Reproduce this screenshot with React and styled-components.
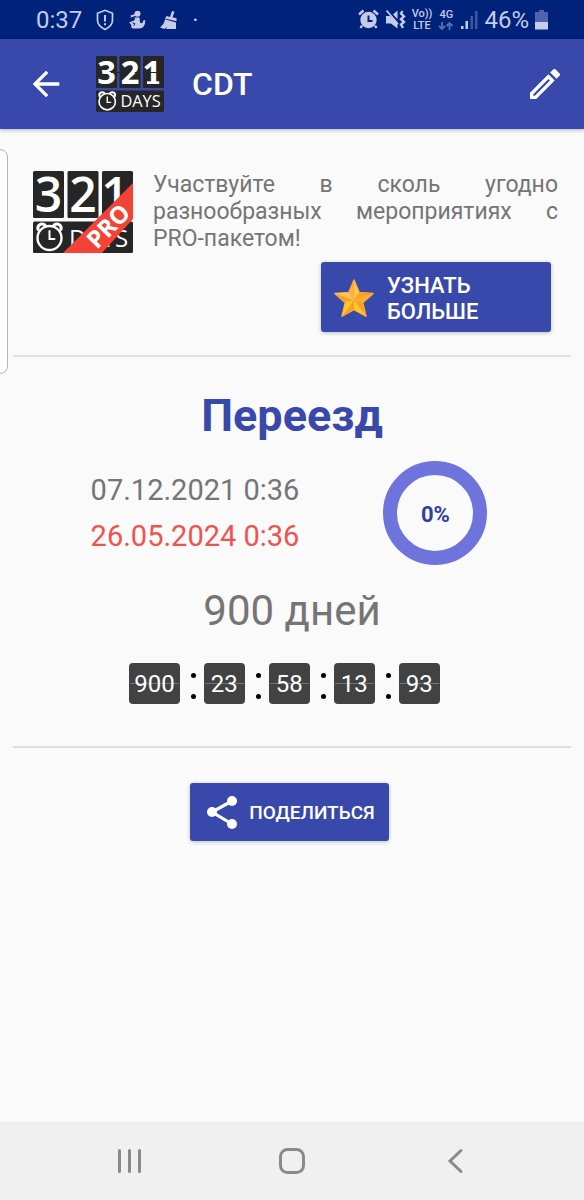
import React from "react";
import styled, { createGlobalStyle } from "styled-components";

const colors = {
  status: "#00227b",
  statusText: "#c5cbe9",
  primary: "#3949ab",
  background: "#fafafa",
  text: "#757575",
  danger: "#ef5350",
  ring: "#6f74dd",
  tile: "#424242",
  line: "#e0e0e0",
  nav: "#f0f0f0",
};

const GlobalStyle = createGlobalStyle`
  * {
    box-sizing: border-box;
  }
  body {
    margin: 0;
    background: ${colors.background};
    color: ${colors.text};
    font-family: Roboto, "Liberation Sans", sans-serif;
  }
  h1, p {
    margin: 0;
  }
  svg {
    display: block;
    flex-shrink: 0;
    overflow: visible;
  }
`;

const Page = styled.div`
  position: relative;
  display: flex;
  flex-direction: column;
  min-height: 100vh;
`;
const StatusBar = styled.div`
  display: flex;
  justify-content: space-between;
  align-items: center;
  height: 39px;
  padding: 0 36px;
  background: ${colors.status};
  color: ${colors.statusText};
  font-size: 24px;
  line-height: 28px;
`;
const StatusGroup = styled.div`
  display: flex;
  align-items: center;
  gap: ${(props) => props.$gap};
`;
const StatusLabel = styled.span`
  display: flex;
  flex-direction: column;
  align-items: center;
  font-size: 11px;
  line-height: 12px;
  font-weight: 500;
  white-space: nowrap;
`;
const Header = styled.header`
  position: relative;
  display: flex;
  align-items: center;
  height: 90px;
  padding: 0 19px 0 26px;
  background: ${colors.primary};
  color: #fff;
  box-shadow: 0 1px 4px rgba(0, 0, 0, 0.3);
`;
const IconButton = styled.button`
  display: flex;
  justify-content: center;
  align-items: center;
  padding: 0;
  border: 0;
  background: none;
  color: inherit;
  cursor: pointer;
`;
const Brand = styled.div`
  display: flex;
  flex: 1;
  align-items: center;
  gap: 28px;
  margin-left: 30px;
`;
const AppName = styled.span`
  font-size: 32px;
  line-height: 38px;
  font-weight: 500;
`;
const EdgePanel = styled.aside`
  position: absolute;
  top: 149px;
  left: -16px;
  width: 24px;
  height: 225px;
  border: 1px solid #b4b4b4;
  border-radius: 8px;
  background: #fff;
`;
const Main = styled.main`
  flex: 1;
  padding: 0 13px;
`;
const Promo = styled.section`
  display: grid;
  grid-template-columns: 100px 1fr;
  gap: 20px;
  padding: 42px 13px 23px 20px;
  border-bottom: 2px solid ${colors.line};
`;
const PromoBody = styled.div`
  display: flex;
  flex-direction: column;
  gap: 10px;
`;
const PromoText = styled.p`
  font-size: 23px;
  line-height: 27px;
  text-align: justify;
`;
const NoWrap = styled.span`
  white-space: nowrap;
`;
const Button = styled.button`
  display: flex;
  align-items: center;
  border: 0;
  border-radius: 3px;
  background: ${colors.primary};
  color: #fff;
  font-family: inherit;
  font-weight: 500;
  text-transform: uppercase;
  text-align: left;
  box-shadow: 0 1px 4px rgba(0, 0, 0, 0.24);
  cursor: pointer;
`;
const MoreButton = styled(Button)`
  align-self: flex-end;
  gap: 12px;
  width: 230px;
  height: 70px;
  margin-right: 7px;
  padding: 3px 64px 0 12px;
  font-size: 22px;
  line-height: 26px;
`;
const ShareButton = styled(Button)`
  gap: 5px;
  height: 58px;
  padding: 2px 14px 0;
  font-size: 19px;
  line-height: 24px;
`;
const Event = styled.section`
  display: flex;
  flex-direction: column;
  align-items: center;
  padding: 32px 0 42px;
  border-bottom: 2px solid ${colors.line};
`;
const Title = styled.h1`
  color: ${colors.primary};
  font-size: 45px;
  line-height: 54px;
  font-weight: 700;
`;
const Summary = styled.div`
  display: flex;
  align-items: center;
  gap: 84px;
  margin-top: 18px;
  padding-right: 6px;
`;
const DateLine = styled.p`
  color: ${(props) => (props.$end ? colors.danger : colors.text)};
  font-size: 29px;
  line-height: 46px;
`;
const Ring = styled.div`
  display: flex;
  justify-content: center;
  align-items: center;
  width: 104px;
  height: 104px;
  padding-top: 3px;
  border: 14px solid ${colors.ring};
  border-radius: 50%;
  color: #303f9f;
  font-size: 22px;
  line-height: 26px;
  font-weight: 700;
`;
const Remaining = styled.p`
  margin-top: 21px;
  font-size: 42px;
  line-height: 50px;
`;
const Timer = styled.div`
  display: flex;
  margin-top: 27px;
  padding-right: 15px;
`;
const Tile = styled.span`
  display: flex;
  justify-content: center;
  align-items: center;
  min-width: 41px;
  height: 41px;
  padding: 0 5px;
  border-radius: 4px;
  background: linear-gradient(#757575, #757575) center / calc(100% - 2px) 1px no-repeat ${colors.tile};
  color: #fff;
  font-size: 24px;
  line-height: 28px;
`;
const Colon = styled.span`
  display: flex;
  flex-direction: column;
  align-items: center;
  justify-content: center;
  gap: 16px;
  width: 24px;
  padding: 5px 0 0 4px;

  &::before,
  &::after {
    content: "";
    width: 5px;
    height: 5px;
    border-radius: 50%;
    background: #000;
  }
`;
const Actions = styled.div`
  display: flex;
  justify-content: center;
  padding: 35px 5px 0 0;
`;
const NavBar = styled.nav`
  display: grid;
  grid-template-columns: repeat(3, 1fr);
  height: 78px;
  padding: 0 48px;
  background: ${colors.nav};
  color: #8a8a8a;
`;

function Logo({ width, height, pro }) {
  return (
    <svg width={width} height={height} viewBox="0 0 100 82" role="img" aria-label="321 days">
      <g fill="#262626">
        <rect x="0" y="0" width="31" height="47" rx="1.5" />
        <rect x="34.5" y="0" width="31" height="47" rx="1.5" />
        <rect x="69" y="0" width="31" height="47" rx="1.5" />
        <rect x="0" y="50.5" width="100" height="31.5" rx="1.5" />
      </g>
      <g
        fill="#fff"
        fontFamily="Open Sans, sans-serif"
        fontSize="48"
        fontWeight={pro ? 600 : 700}
        textAnchor="middle"
      >
        <text x="15.5" y="41">3</text>
        <text x="50" y="41">2</text>
        <text x="82" y="41">1</text>
      </g>
      {!pro && (
        <>
          <path d="M75 37h18v4H75z" fill="#fff" />
          <path d="M1 24h8M22 24h16M57 24h6M70 24h29" stroke="#262626" strokeWidth="1.5" />
        </>
      )}
      <g fill="none" stroke="#fff" strokeWidth="2.4" strokeLinecap="round">
        <circle cx="16.500" cy="67" r="12" />
        <path d="M16.500 60v8h5" strokeWidth="2" />
        <path d="M5 58.500c-1-4 3-7 7-4.500M28 58.500c1-4-3-7-7-4.500" strokeWidth="3" />
      </g>
      <text x="36" y="75.500" fill="#fff" fontFamily="Open Sans, sans-serif" fontSize="24">
        DAYS
      </text>
      {pro && (
        <>
          <path d="M100 12v36L69 82H30z" fill="#f44336" />
          <text
            transform="translate(64 79) rotate(-46)"
            fill="#fff"
            fontFamily="Open Sans, sans-serif"
            fontSize="24"
            fontWeight="700"
          >
            PRO
          </text>
        </>
      )}
    </svg>
  );
}

function StarIcon() {
  return (
    <svg width="42" height="42" viewBox="0 0 42 42" aria-hidden="true">
      <path
        d="M21 2l5.200 12.500 14 1-10.500 9.200 3.300 13.500L21 31.500 9 38.200l3.300-13.500L1.800 15.500l14-1z"
        fill="#ffb02e"
        stroke="#fbaa3c"
        strokeWidth="1.500"
        strokeLinejoin="round"
      />
      <path d="M40.200 15.500L21 22l5.200-7.500zM33 38.200L21 22l8.700 2.700zM9 38.200L21 22v9.500zM1.800 15.500L21 22l-8.700 2.700z" fill="#fba028" />
      <path d="M21 2v20l5.200-7.500zM1.800 15.500L21 22l-5.200-7.500z" fill="#ffc35a" />
      <path d="M12.300 24.700L9 38.200 21 22zM21 31.500V22l12 16.200z" fill="#ffc928" />
    </svg>
  );
}

function StatusIcons() {
  return (
    <>
      <svg width="18" height="22" viewBox="0 0 18 22" fill="none" stroke="currentColor" strokeWidth="1.700">
        <path d="M9 1.300l7.500 3v7c0 4-3 7-7.500 9.300C4.500 18.300 1.500 15.300 1.500 11.300v-7z" />
        <path d="M9 6v6.500M9 14.200v2" strokeWidth="2" />
      </svg>
      <svg width="18" height="20" viewBox="0 0 18 20" fill="currentColor">
        <circle cx="9.500" cy="3.800" r="3" />
        <path d="M6.500 7.500h5l.5 5c1.500 1.500 3 .5 3.200-2l2-.5c.3 5-2 8.500-6.200 8.500H6c-2.500 0-3.500-2-2.500-3.500L1 12.500l6-2.500zM2.500 5.500L7 4v2L3 7.500z" />
        <path d="M4.500 12.800l2.500 1-1.500 2" fill="none" stroke={colors.status} />
      </svg>
      <svg width="18" height="20" viewBox="0 0 18 20" fill="currentColor">
        <path d="M12 1l2.500.8-2 5.500 4 1v3L5 8.500 6.500 6l3.500 1zM5 9.200l11 3.300v6.500H6l1-2-2.500 2L0 17.500c2.500-2 4.500-5 5-8.300z" />
      </svg>
    </>
  );
}

function AlarmIcon() {
  return (
    <svg width="21" height="21" viewBox="0 0 21 21" fill="currentColor">
      <circle cx="10.500" cy="11" r="8.200" />
      <path d="M4 16.500L2.500 19M17 16.500l1.500 2.500M1 5.500L5.500 1.500M20 5.500l-4.500-4" stroke="currentColor" strokeWidth="2.400" />
      <path d="M10.500 6.500V12h4" fill="none" stroke={colors.status} strokeWidth="2" />
    </svg>
  );
}

function MuteIcon() {
  return (
    <svg width="21" height="21" viewBox="0 0 21 21" fill="currentColor">
      <path d="M1 7h4l7.500 7v5.500L6 14.500H1zM8 5.500L12.500 1.500v8.500z" />
      <path d="M1.500 1.500L13 15" stroke="currentColor" strokeWidth="1.800" />
      <path d="M17.500 2l-1.500 2.500L19 7.500l-3 2.700 3 2.800-3 2.500 2 3.500" fill="none" stroke="currentColor" strokeWidth="2.400" />
    </svg>
  );
}

function DataArrows() {
  return (
    <svg width="16" height="10" viewBox="0 0 16 10" fill="none" stroke="#5a6cb2" strokeWidth="1.800">
      <path d="M4 1v7M1 5l3 3 3-3M11.500 9V2M8.500 5l3-3 3 3" />
    </svg>
  );
}

function SignalIcon() {
  return (
    <svg width="18" height="20" viewBox="0 0 18 20">
      <path d="M1 16h2.500v3H1zM5.500 11H8v8H5.500z" fill="currentColor" />
      <path d="M10.500 6H13v13h-2.500zM15 1h2.500v18H15z" fill="#4054a3" />
    </svg>
  );
}

function BatteryIcon() {
  return (
    <svg width="13" height="20" viewBox="0 0 13 20">
      <path d="M4 0h5v2h4v10H0V2h4z" fill="#5163ad" />
      <path d="M0 12h13v7.500H0z" fill="currentColor" />
    </svg>
  );
}

function MaterialIcon({ path, size = 40 }) {
  return (
    <svg width={size} height={size} viewBox="0 0 24 24" fill="currentColor" aria-hidden="true">
      <path d={path} />
    </svg>
  );
}

const icons = {
  back: "M20 11H7.830l5.590-5.590L12 4l-8 8 8 8 1.410-1.410L7.830 13H20v-2z",
  edit: "M14.060 9.020l.92.92L5.920 19H5v-.92l9.060-9.060M17.660 3c-.25 0-.51.1-.7.290l-1.830 1.830 3.750 3.750 1.830-1.830c.39-.39.39-1.020 0-1.410l-2.340-2.340c-.2-.2-.45-.29-.71-.29zm-3.600 3.190L3 17.250V21h3.750L17.810 9.940l-3.750-3.750z",
};

function ShareIcon() {
  return (
    <svg width="40" height="40" viewBox="0 0 40 40" fill="#fff" aria-hidden="true">
      <path d="M28 8L8 19l20 12" fill="none" stroke="#fff" strokeWidth="3.200" />
      <circle cx="28" cy="8" r="5" />
      <circle cx="8" cy="19" r="5" />
      <circle cx="28" cy="31" r="5" />
    </svg>
  );
}

const units = ["900", "23", "58", "13", "93"];

export default function App() {
  return (
    <>
      <GlobalStyle />
      <Page>
        <StatusBar>
          <StatusGroup $gap="14px">
            <span>0:37</span>
            <StatusIcons />
            <span>·</span>
          </StatusGroup>
          <StatusGroup $gap="6px">
            <AlarmIcon />
            <MuteIcon />
            <StatusLabel>
              <span>Vo))</span>
              <span>LTE</span>
            </StatusLabel>
            <StatusLabel>
              <span>4G</span>
              <DataArrows />
            </StatusLabel>
            <SignalIcon />
            <span>46%</span>
            <BatteryIcon />
          </StatusGroup>
        </StatusBar>
        <Header>
          <IconButton aria-label="Назад">
            <MaterialIcon path={icons.back} />
          </IconButton>
          <Brand>
            <Logo width={68} height={56} />
            <AppName>CDT</AppName>
          </Brand>
          <IconButton aria-label="Изменить">
            <MaterialIcon path={icons.edit} />
          </IconButton>
        </Header>
        <EdgePanel />
        <Main>
          <Promo>
            <Logo width={100} height={82} pro />
            <PromoBody>
              <PromoText>
                Участвуйте в сколь угодно разнообразных мероприятиях с <NoWrap>PRO-пакетом!</NoWrap>
              </PromoText>
              <MoreButton>
                <StarIcon />
                Узнать больше
              </MoreButton>
            </PromoBody>
          </Promo>
          <Event>
            <Title>Переезд</Title>
            <Summary>
              <div>
                <DateLine>07.12.2021 0:36</DateLine>
                <DateLine $end>26.05.2024 0:36</DateLine>
              </div>
              <Ring>0%</Ring>
            </Summary>
            <Remaining>900 дней</Remaining>
            <Timer>
              {units.map((unit, index) => (
                <React.Fragment key={unit}>
                  {index > 0 && <Colon />}
                  <Tile>{unit}</Tile>
                </React.Fragment>
              ))}
            </Timer>
          </Event>
          <Actions>
            <ShareButton>
              <ShareIcon />
              Поделиться
            </ShareButton>
          </Actions>
        </Main>
        <NavBar>
          <IconButton aria-label="Недавние">
            <svg width="28" height="28" viewBox="0 0 28 28" stroke="currentColor" strokeWidth="3" strokeLinecap="round">
              <path d="M4.500 3.500v21M14.500 3.500v21M24.500 3.500v21" />
            </svg>
          </IconButton>
          <IconButton aria-label="Домой">
            <svg width="28" height="28" viewBox="0 0 28 28" fill="none" stroke="currentColor" strokeWidth="3">
              <rect x="2.500" y="2.500" width="23" height="23" rx="7" />
            </svg>
          </IconButton>
          <IconButton aria-label="Назад">
            <svg width="28" height="28" viewBox="0 0 28 28" fill="none" stroke="currentColor" strokeWidth="3" strokeLinecap="round">
              <path d="M20 3.500L9 14l11 10.500" />
            </svg>
          </IconButton>
        </NavBar>
      </Page>
    </>
  );
}
